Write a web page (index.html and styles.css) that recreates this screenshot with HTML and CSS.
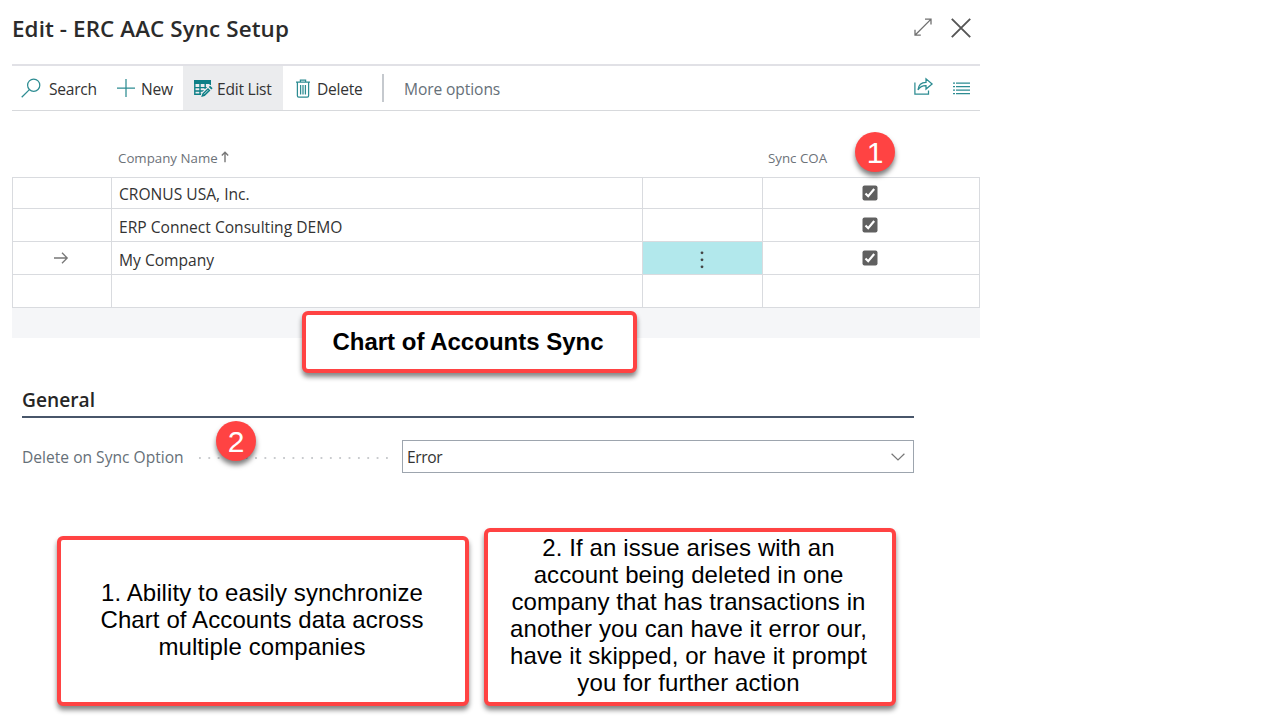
FILE: index.html
```html
<!DOCTYPE html>
<html lang="en">
<head>
<meta charset="utf-8">
<title>Edit - ERC AAC Sync Setup</title>
<link rel="stylesheet" href="styles.css">
</head>
<body>
<main class="page">
  <header class="titlebar">
    <h1 class="title">Edit - ERC AAC Sync Setup</h1>
    <div class="window-actions">
      <svg class="icon-expand" width="20" height="20" viewBox="0 0 20 20"><path d="M2.2 18 17.8 2.4M12 2.2H18V7.6M2 12.8V18.2H7.8"/></svg>
      <svg class="icon-close" width="22" height="22" viewBox="0 0 22 22"><path d="M1.8 1.8 20.2 20.2M20.2 1.8 1.8 20.2"/></svg>
    </div>
  </header>

  <nav class="toolbar">
    <div class="tool search">
      <svg class="teal" width="20" height="20" viewBox="0 0 20 20"><circle cx="12.7" cy="7.2" r="6.1"/><path d="M8.4 11.6.7 19.2"/></svg>
      <span class="label">Search</span>
    </div>
    <div class="tool new">
      <svg class="teal plus" width="18" height="18" viewBox="0 0 18 18"><path d="M9 0V18M0 9H18"/></svg>
      <span class="label">New</span>
    </div>
    <div class="tool edit-list">
      <svg class="edit-icon" width="19" height="18" viewBox="0 0 19 18">
        <path class="solid" d="M0 0H17V4H0Z"/>
        <path d="M.8 3V14.3H8M16.3 3V5M1 7.6H13M1 11H10M6 4V14.3M11.2 4V9"/>
        <path class="halo" d="M7.2 17.4 8.4 13.2 15.2 6.3 18 9.1 11.2 16Z"/>
        <path class="solid" d="M7.2 17 8.4 13.5 14 8 16.4 10.4 10.8 15.9ZM14.8 7.1 16.1 5.8 18.6 8.2 17.3 9.5Z"/>
        <path class="glint" d="M10 14.3 14.2 10.1"/>
      </svg>
      <span class="label">Edit List</span>
    </div>
    <div class="tool delete">
      <svg class="teal" width="14" height="19" viewBox="0 0 14 19"><path d="M0 3.1H14M4.4 3V1H9.6V3M1.4 3.5V16.7Q1.4 18 2.7 18H11.3Q12.6 18 12.6 16.7V3.5M4.6 6V15.4M7 6V15.4M9.4 6V15.4"/></svg>
      <span class="label">Delete</span>
    </div>
    <span class="divider"></span>
    <span class="label more">More options</span>
    <div class="tool-end">
      <svg class="teal share" width="19" height="18" viewBox="0 0 19 18"><path d="M.9 4.4V16.1H14.5V12.4M4 11.9C4.5 6.7 7.2 4.3 12 4.3V.8L18.1 6 12 11.1V7.7C8 7.6 6 8.8 4 11.9Z"/></svg>
      <svg class="teal lines" width="17" height="13" viewBox="0 0 17 13"><path d="M0 1H2M3 1H17M0 4.5H2M3 4.5H17M0 8H2M3 8H17M0 11.5H2M3 11.5H17"/></svg>
    </div>
  </nav>

  <section class="list">
    <div class="columns">
      <span class="head name">Company Name</span>
      <svg class="sort" width="8" height="12" viewBox="0 0 8 12"><path d="M4 11.2V1.3M.8 4.5 4 1.2 7.2 4.5"/></svg>
      <span class="head sync">Sync COA</span>
    </div>
    <div class="grid">
      <div class="cell"></div><div class="cell company first">CRONUS USA, Inc.</div><div class="cell"></div>
      <div class="cell flag"><svg class="check" width="16" height="16" viewBox="0 0 16 16"><rect x=".5" y=".5" width="15" height="15" rx="2"/><path d="M3.5 8.5 6.2 11.2 12.2 4"/></svg></div>
      <div class="cell"></div><div class="cell company">ERP Connect Consulting DEMO</div><div class="cell"></div>
      <div class="cell flag"><svg class="check" width="16" height="16" viewBox="0 0 16 16"><rect x=".5" y=".5" width="15" height="15" rx="2"/><path d="M3.5 8.5 6.2 11.2 12.2 4"/></svg></div>
      <div class="cell current"><svg class="arrow" width="14" height="12" viewBox="0 0 14 12"><path d="M0 6H13.2M8 .8 13.2 6 8 11.2"/></svg></div><div class="cell company">My Company</div>
      <div class="cell selected"><svg class="dots" width="4" height="17" viewBox="0 0 4 17"><circle cx="2" cy="1.8" r="1.4"/><circle cx="2" cy="8.8" r="1.4"/><circle cx="2" cy="15.8" r="1.4"/></svg></div>
      <div class="cell flag"><svg class="check" width="16" height="16" viewBox="0 0 16 16"><rect x=".5" y=".5" width="15" height="15" rx="2"/><path d="M3.5 8.5 6.2 11.2 12.2 4"/></svg></div>
      <div class="cell"></div><div class="cell"></div><div class="cell"></div><div class="cell"></div>
    </div>
    <div class="grid-footer"></div>
  </section>

  <section class="general">
    <h2 class="section-title">General</h2>
    <div class="field">
      <span class="field-label">Delete on Sync Option</span>
      <svg class="leader" width="190" height="4" viewBox="0 0 190 4"><path d="M1 2H190"/></svg>
      <div class="select"><span>Error</span>
        <svg class="chevron" width="14" height="8" viewBox="0 0 14 8"><path d="M.6.7 7 7 13.4.7"/></svg>
      </div>
    </div>
  </section>

  <section class="notes">
    <p class="callout note note-one"><span>1. Ability to easily synchronize<br>Chart of Accounts data across<br>multiple companies</span></p>
    <p class="callout note note-two"><span>2. If an issue arises with an<br>account being deleted in one<br>company that has transactions in<br>another you can have it error our,<br>have it skipped, or have it prompt<br>you for further action</span></p>
  </section>

  <div class="callout heading-callout"><span>Chart of Accounts Sync</span></div>
  <div class="badge badge-one">1</div>
  <div class="badge badge-two">2</div>
</main>
</body>
</html>
```
FILE: styles.css
```css
* { box-sizing: border-box; }
body {
  margin: 0;
  background: #fff;
  color: #333;
  font-family: "Open Sans", "Noto Sans", sans-serif;
  font-size: 15.6px;
}
svg { display: block; flex: none; fill: none; overflow: visible; }
.page { position: relative; width: 980px; height: 720px; }

.titlebar {
  display: flex;
  justify-content: space-between;
  height: 64px;
  padding: 0 8px 0 12px;
}
.title {
  margin: 0;
  color: #2b2b2b;
  font-size: 22.4px;
  font-weight: 600;
  line-height: 58px;
  letter-spacing: 0.1px;
  white-space: nowrap;
}
.window-actions { display: flex; gap: 17px; padding-top: 17px; }
.icon-expand { margin-left: 1px; stroke: #707070; stroke-width: 1.3; }
.icon-close { stroke: #555; stroke-width: 1.9; }

.toolbar {
  display: flex;
  align-items: center;
  height: 47px;
  margin-left: 12px;
  border-top: 2px solid #e1e1e6;
  border-bottom: 1px solid #d7d9dc;
}
.tool { display: flex; align-items: center; height: 100%; }
.label { letter-spacing: -0.25px; white-space: nowrap; line-height: 44px; padding-top: 2px; }
.teal { stroke: #2d8c92; stroke-width: 1.25; }
.plus { margin-bottom: 1px; }
.search { width: 105px; padding-left: 9px; gap: 8px; }
.new { width: 66px; gap: 6px; }
.edit-list { width: 100px; padding-left: 11px; gap: 4px; background: #ebecee; }
.edit-icon { margin-top: 1px; stroke: #0d7f86; stroke-width: 1.4; }
.solid { fill: #0d7f86; stroke: none; }
.halo { fill: #ebecee; stroke: #ebecee; stroke-width: 2; }
.glint { stroke: #bddcdf; stroke-width: 1; }
.delete { width: 99px; padding-left: 13px; gap: 7px; }
.divider { width: 2px; height: 28px; background: #c5c9ce; }
.more { margin-left: 20px; color: #667078; letter-spacing: -0.1px; }
.tool-end { display: flex; align-items: center; gap: 20px; margin-left: auto; padding-right: 10px; }
.share { margin-bottom: 2px; }

.list { padding-left: 12px; }
.columns { display: flex; height: 66px; padding: 37px 0 0 106px; color: #6c7279; font-size: 13.3px; line-height: 21px; }
.head { white-space: nowrap; }
.name { width: 103px; }
.sort { margin-top: 3px; stroke: #777; stroke-width: 1.4; }
.sync { margin-left: 539px; }
.grid {
  display: grid;
  grid-template-columns: 99px 531px 120px 218px;
  grid-template-rows: 31px 33px 33px 33px;
  border-bottom: 1px solid #d9dbdf;
  border-right: 1px solid #d9dbdf;
}
.cell {
  display: flex;
  align-items: center;
  justify-content: center;
  border-top: 1px solid #d9dbdf;
  border-left: 1px solid #d9dbdf;
}
.company { justify-content: flex-start; padding: 3px 0 0 7px; white-space: nowrap; }
.first { padding-top: 2px; }
.flag { padding-right: 4px; }
.current { padding-right: 2px; }
.selected { padding: 2px 2px 0 0; background: #b2e8ec; }
.check rect { fill: #606060; }
.check path { stroke: #fff; stroke-width: 2.2; }
.arrow { stroke: #777; stroke-width: 1.3; }
.dots { fill: #444; }
.grid-footer { height: 30px; background: #f5f6f8; }

.general { padding: 44px 66px 0 22px; }
.section-title {
  height: 36px;
  margin: 0;
  border-bottom: 2px solid #48566a;
  color: #262626;
  font-size: 19.2px;
  font-weight: 600;
  line-height: 36px;
}
.field { display: flex; align-items: center; height: 33px; margin-top: 22px; }
.field-label { width: 176px; color: #667078; white-space: nowrap; padding-top: 1px; }
.leader { stroke: #c9cbce; stroke-width: 1.8; stroke-dasharray: 1.8 7.55; margin: 3px 14px 0 0; }
.select {
  display: flex;
  flex: 1;
  align-items: center;
  justify-content: space-between;
  height: 33px;
  padding: 0 8px 0 4px;
  border: 1px solid #9da5ae;
  letter-spacing: -0.4px;
}
.chevron { stroke: #777; stroke-width: 1.2; }

.callout {
  display: flex;
  align-items: center;
  justify-content: center;
  margin: 0;
  border: 4px solid #ff4343;
  border-radius: 6px;
  background: #fff;
  box-shadow: 0 4px 5px rgba(0, 0, 0, 0.48);
  color: #000;
  font-family: "Liberation Sans", Arial, sans-serif;
  font-size: 24px;
  line-height: 27px;
  text-align: center;
  white-space: nowrap;
}
.notes { display: flex; align-items: flex-end; gap: 15px; margin-top: 55px; padding-left: 57px; }
.note { letter-spacing: 0.1px; }
.note-one { width: 412px; height: 170px; padding: 0 2px 4px 0; }
.note-two { width: 412px; height: 178px; padding: 0 3px 4px 0; }
.heading-callout {
  position: absolute;
  left: 302px;
  top: 311px;
  width: 335px;
  height: 62px;
  padding: 0 3px 2px 0;
  font-weight: 700;
}
.badge {
  position: absolute;
  width: 40px;
  height: 40px;
  border-radius: 50%;
  background: #ff4343;
  box-shadow: 0 4px 5px rgba(0, 0, 0, 0.5);
  color: #fff;
  font-family: "Liberation Sans", Arial, sans-serif;
  font-size: 30px;
  line-height: 42px;
  text-align: center;
}
.badge-one { left: 855px; top: 132px; }
.badge-two { left: 216px; top: 421px; }
```
